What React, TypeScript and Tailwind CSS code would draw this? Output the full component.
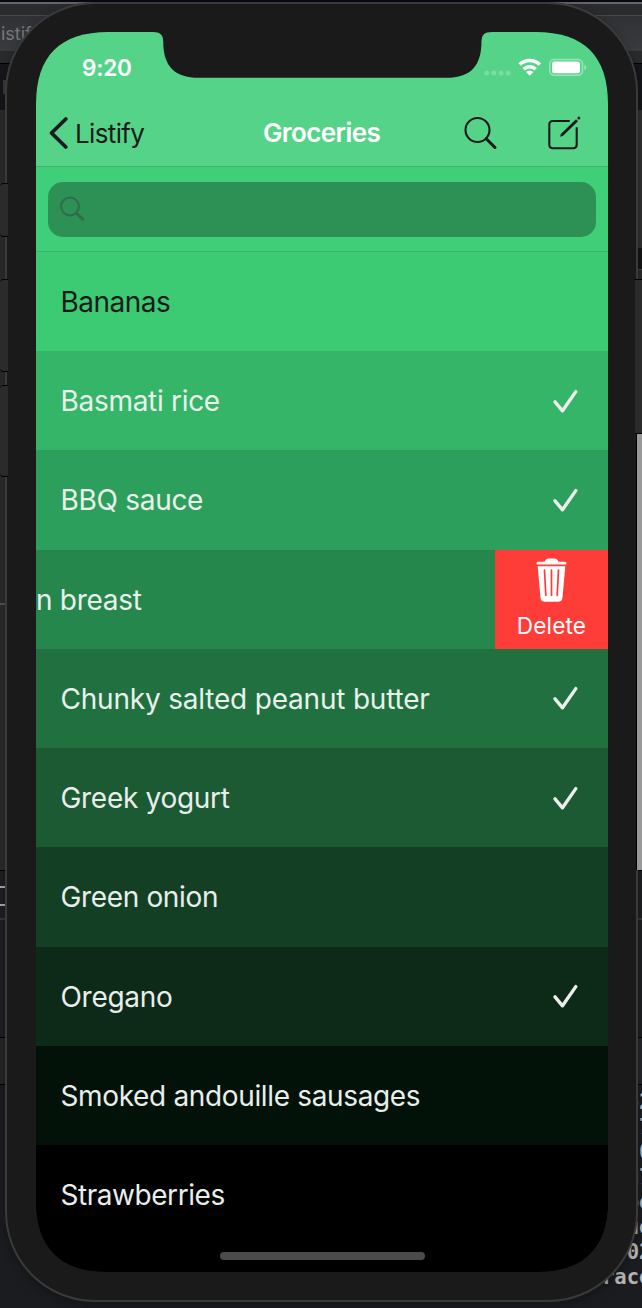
import React from 'react';

type Item = { name: string; bg: string; done?: boolean; swiped?: boolean; text: string };

const items: Item[] = [
  { name: 'Bananas', bg: 'bg-[#3ccb73]', text: 'text-[#1b1b1b] tracking-[-0.5px]' },
  { name: 'Basmati rice', bg: 'bg-[#34b567]', done: true, text: 'text-[#e9f1ec] tracking-[-0.3px]' },
  { name: 'BBQ sauce', bg: 'bg-[#2d9f5c]', done: true, text: 'text-[#e9f1ec] tracking-[-0.3px]' },
  { name: 'Chicken breast', bg: 'bg-[#26874d]', swiped: true, text: 'text-[#e9f1ec] tracking-[-0.3px]' },
  { name: 'Chunky salted peanut butter', bg: 'bg-[#207040]', done: true, text: 'text-[#e9f1ec] tracking-[-0.2px]' },
  { name: 'Greek yogurt', bg: 'bg-[#1b5a33]', done: true, text: 'text-[#e9eeeb] tracking-[-0.3px]' },
  { name: 'Green onion', bg: 'bg-[#134025]', text: 'text-[#e9eeeb] tracking-[-0.35px]' },
  { name: 'Oregano', bg: 'bg-[#0d2a19]', done: true, text: 'text-[#e9eeeb] tracking-[-0.3px]' },
  { name: 'Smoked andouille sausages', bg: 'bg-[#021209]', text: 'text-[#e9eeeb] tracking-[-0.35px]' },
  { name: 'Strawberries', bg: 'bg-black', text: 'text-[#e9eeeb] tracking-[-0.45px]' },
];

const logLines = ['  62', '  .7', '  -0', '  g7', '  po', '  ue', '  02', 'race'];

function Check() {
  return (
    <svg className="h-[26px] w-[28px]" viewBox="0 0 28 26" fill="none" stroke="#ededed" strokeWidth="3.4" strokeLinecap="round" strokeLinejoin="round">
      <path d="M4 13.900L11.500 22.800L24.800 3.600" />
    </svg>
  );
}

function Trash() {
  return (
    <svg className="h-[44px] w-[32px]" viewBox="0.5 0 32 44">
      <path fill="#fff" d="M1 6.600V5.200Q1 3.800 3 3.800H9Q10.500 .5 13 .5H19Q21.500 .5 23 3.800H29Q31 3.800 31 5.200V6.600Z" />
      <path fill="#fff" d="M2.200 8.200H29.800L27 39.500Q26.600 43.800 22.500 43.800H9.500Q5.400 43.800 5 39.500Z" />
      <path stroke="#fe3c38" strokeWidth="1.700" strokeLinecap="round" d="M9 12L10.300 37.300M16 12V37.300M23 12L21.700 37.300" />
    </svg>
  );
}

function StatusIcons() {
  return (
    <svg className="h-[22px] w-[104px]" viewBox="484 56 104 22" fill="none">
      <g fill="#fff" fillOpacity=".22">
        <circle cx="486.700" cy="73" r="2.500" />
        <circle cx="493.900" cy="73" r="2.500" />
        <circle cx="501.100" cy="73" r="2.500" />
        <circle cx="508.300" cy="73" r="2.500" />
      </g>
      <path stroke="#fff" strokeWidth="3.500" d="M519.600 64.500A14.600 14.600 0 0 1 539.800 64.500M523.700 69.200A8.600 8.600 0 0 1 535.700 69.200" />
      <path fill="#fff" d="M526 72Q529.700 68.800 533.400 72L529.700 75.700Z" />
      <rect x="549.700" y="59.500" width="32.800" height="15.700" rx="4.600" stroke="#fff" strokeOpacity=".4" strokeWidth="1.500" />
      <rect x="552" y="61.500" width="28" height="11.800" rx="2.500" fill="#fff" />
      <path d="M584.300 64.800Q586.300 65.400 586.300 67.400T584.300 70Z" fill="#fff" fillOpacity=".4" />
    </svg>
  );
}

function Row({ item }: { item: Item }) {
  return (
    <li className={`flex h-[99.270px] shrink-0 items-center justify-between ${item.bg}`}>
      <span className={`pt-px text-[28px] leading-none font-normal whitespace-pre ${item.text} ${item.swiped ? '-ml-[89px]' : 'pl-[24.500px]'}`}>{item.name}</span>
      {item.done && <span className="pr-[28.800px]"><Check /></span>}
      {item.swiped && (
        <button className="flex h-full w-[113px] flex-col items-center bg-[#fe3c38] pt-[8px] text-[22.500px] leading-none font-normal text-white">
          <Trash />
          <span className="mt-[13.500px] tracking-[0.200px]">Delete</span>
        </button>
      )}
    </li>
  );
}

function Desktop() {
  return (
    <div className="flex h-full w-full flex-col">
      <div className="h-[2px] bg-[#080812]" />
      <div className="h-[2px] bg-[#66666a]" />
      <div className="h-[11px] bg-[#2a2b2f]" />
      <div className="h-[36px] border-t border-[#48494d] bg-linear-to-b from-[#303135] to-[#3a3b3f] pt-[8px] pl-px text-[18px] leading-[20px] text-[#78797c]">istify</div>
      <div className="h-[12px] bg-[#292a2c]" />
      <div className="flex h-[47px] items-start border-t border-black bg-[#151619] pt-[16px]">
        <div className="ml-[3px] h-[14px] w-[5px] bg-[#3b3b3e]" />
      </div>
      <div className="flex h-[760px] justify-between bg-[#2b2b2b]">
        <div className="w-[10px] pt-[493px]"><div className="h-[2px] bg-[#555]" /></div>
        <div className="flex w-[10px] flex-col">
          <div className="h-[138px] bg-[#303030]" />
          <div className="h-[22px] border-b border-[#444] bg-[#151515]" />
          <div className="h-[164px] bg-[#2b2b2b]" />
          <div className="h-[436px] bg-[#999]" />
        </div>
      </div>
      <div className="flex h-[167px] justify-between border-t border-black bg-[#1e1f22]">
        <div className="flex w-[10px] flex-col pt-[15px]">
          <div className="h-[2px] bg-[#aaa]" />
          <div className="mt-[16px] h-[2px] bg-[#aaa]" />
          <div className="mt-[12px] h-[2px] bg-[#38383a]" />
        </div>
        <div className="w-[10px] pt-[47px]"><div className="h-[2px] bg-[#38383a]" /></div>
      </div>
      <div className="h-[47px] border-t border-black bg-[#242528]" />
      <div className="flex grow flex-col border-t border-black bg-[#1b1c20] pt-[5px] pl-[602px]">
        {logLines.map((line) => (
          <span key={line} className="h-[25px] text-[20.500px] leading-[25px] font-bold whitespace-pre text-[#b4b4b4] [font-family:'DejaVu_Sans_Mono',monospace]">{line}</span>
        ))}
      </div>
    </div>
  );
}

export default function App() {
  return (
    <main className="relative h-[1308px] w-[642px] overflow-hidden bg-[#1b1c20] [font-family:Inter,sans-serif]">
      <Desktop />

      <div className="absolute top-[2px] left-[5px] h-[1300px] w-[633px] rounded-[90px] border-2 border-[#3a3a3b] bg-[#1a1a1a] pt-[28px] pl-[29px] shadow-[0_3px_8px_1px_rgba(0,0,0,0.25)]">
        <div className="relative flex h-[1240px] w-[572px] flex-col overflow-hidden bg-black [clip-path:path('M0_72C0_24_24_0_72_0H500C548_0_572_24_572_72V1168C572_1216_548_1240_500_1240H72C24_1240_0_1216_0_1168Z')]">
          <header className="flex h-[135px] shrink-0 flex-col border-b border-[#43b16e] bg-[#55d489]">
            <div className="flex h-[68px] items-start justify-between pl-[46px]">
              <span className="mt-[24.500px] text-[22.500px] leading-none font-semibold tracking-[-0.200px] text-white">9:20</span>
              <span className="mt-[24px] mr-[20px]"><StatusIcons /></span>
            </div>
            <div className="grid h-[66px] grid-cols-[227px_118px_1fr] items-center">
              <a className="flex items-center gap-[5px] pl-[12px] text-[26px] leading-none text-[#1b1b1b]">
                <svg className="h-[34px] w-[22px]" viewBox="0 0 22 34" fill="none" stroke="#1f1b20" strokeWidth="3.800" strokeLinecap="round" strokeLinejoin="round">
                  <path d="M17.800 3L3.500 17L17.800 31" />
                </svg>
                <span className="pt-px font-normal tracking-[-0.650px]">Listify</span>
              </a>
              <h1 className="text-[26px] leading-none font-semibold tracking-[-0.600px] whitespace-nowrap text-white">Groceries</h1>
              <div className="flex items-center justify-between pr-[26px] pl-[81px]">
                <svg className="h-[36px] w-[36px]" viewBox="462 114.500 36 36" fill="none" stroke="#1c191d" strokeLinecap="round">
                  <circle cx="477.500" cy="129.500" r="12" strokeWidth="2.100" />
                  <path strokeWidth="3" d="M487 139L495 147" />
                  <path strokeWidth="2" d="M485.900 138L487.500 139.500" />
                </svg>
                <svg className="h-[38px] w-[36px]" viewBox="546 112.500 36 38" fill="none" stroke="#1c191d" strokeLinecap="round" strokeLinejoin="round">
                  <path strokeWidth="2.100" d="M569 119.500H553Q549.300 119.500 549.300 123V143Q549.300 146.700 553 146.700H573Q576.700 146.700 576.700 143V126.500" />
                  <path strokeWidth="2.800" strokeLinecap="butt" d="M561.800 133.500L577 118.700" />
                  <path fill="#1c191d" stroke="none" d="M560 135.300L561 132.300L563.200 134.200Z" />
                  <path strokeWidth="3" d="M578.900 116.400V116.500" />
                </svg>
              </div>
            </div>
          </header>
          <div className="h-[84.750px] shrink-0 border-b border-[#36b566] bg-[#40cf79] px-[12px] pt-[14.500px]">
            <div className="flex h-[55px] w-[548px] items-center rounded-[15px] bg-[#2d9055] pl-[10px]">
              <svg className="h-[28px] w-[28px]" viewBox="58 195 28 28" fill="none" stroke="#326b4b" strokeLinecap="round">
                <circle cx="70" cy="206.500" r="8.900" strokeWidth="2" />
                <path strokeWidth="2.800" d="M77.200 213.900L82.800 219.300" />
              </svg>
            </div>
          </div>
          <ul className="flex flex-col">
            {items.map((item) => <Row key={item.name} item={item} />)}
          </ul>
          <svg className="absolute top-0 left-[114px] h-[47px] w-[346px]" viewBox="150 32 346 47">
            <path fill="#1a1a1a" d="M153 32C160 32 163.200 35 163.200 41C163.200 66 174 77.800 199 77.800H446C471 77.800 481.500 66 481.500 41C482 35 484 32 492 32Z" />
          </svg>
          <div className="absolute bottom-[12px] left-[184px] h-[8px] w-[205px] rounded-full bg-[#4b4b4b]" />
        </div>
      </div>

      <div className="absolute top-[183px] left-0 flex w-[8px] flex-col">
        <div className="h-[54px] rounded-l border-y border-black bg-[#2b2b2b]" />
        <div className="mt-[42px] h-[93px] rounded-l border-y border-black bg-[#2b2b2b]" />
        <div className="mt-[13px] h-[92px] rounded-l border-y border-black bg-[#2b2b2b]" />
      </div>
      <div className="absolute top-[279px] right-0 h-[155px] w-[7px] border-y border-black bg-[#2b2b2b]" />
      <div className="absolute top-[434px] right-0 h-[436px] w-[6px] border-l border-black bg-[#999]" />
    </main>
  );
}
